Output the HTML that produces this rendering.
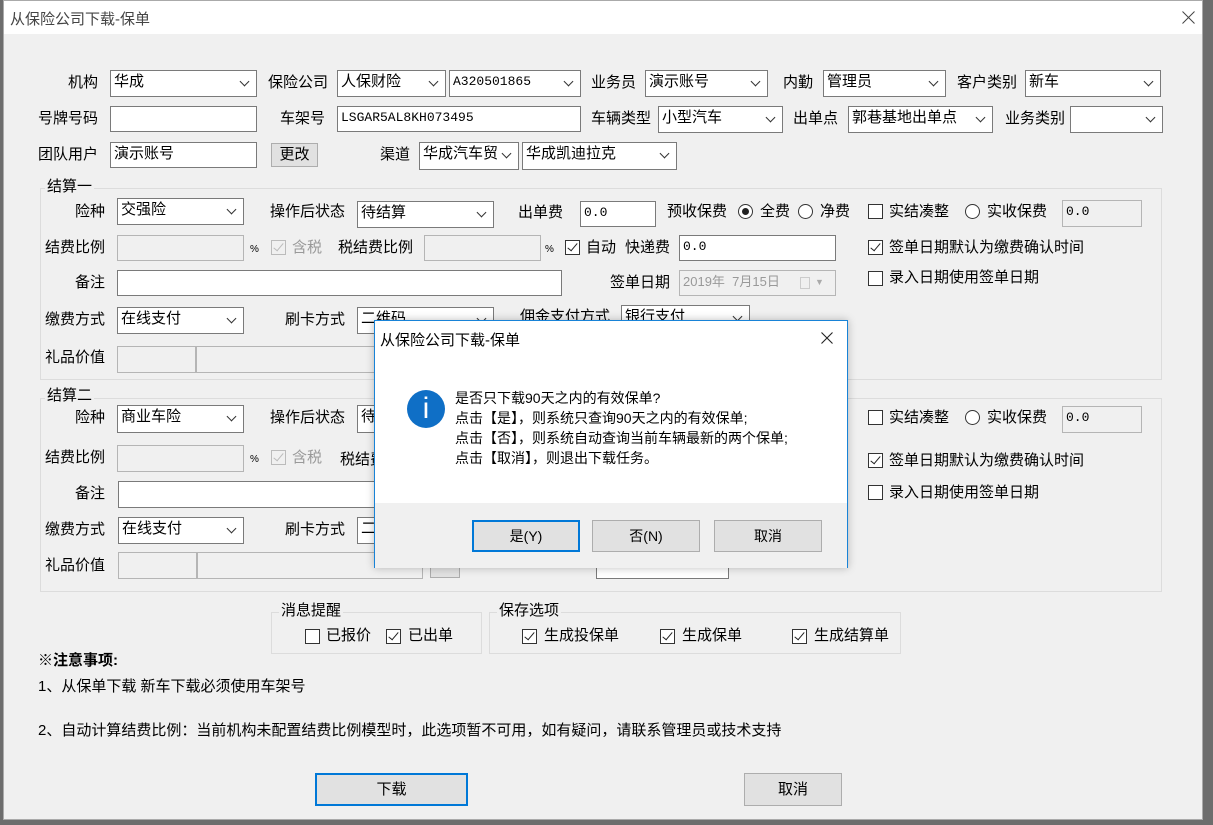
<!DOCTYPE html>
<html><head><meta charset="utf-8">
<style>
*{box-sizing:border-box;margin:0;padding:0}
body{width:1213px;height:825px;overflow:hidden;background:#6d6d6d;font-family:"Liberation Sans","Noto Sans CJK SC","WenQuanYi Zen Hei",sans-serif;font-size:15px;color:#000;position:relative}
#win{position:absolute;left:3px;top:0;width:1200px;height:820px;background:#f0f0f0;border:1px solid #aaa}
#tb{position:absolute;left:0;top:0;width:100%;height:33px;background:#fff}
.a{position:absolute;white-space:nowrap}
.l{position:absolute;white-space:nowrap;line-height:20px}
.b{position:absolute;background:#fff;border:1px solid #7a7a7a;line-height:22px;padding-left:3px;font-size:15px;white-space:nowrap;overflow:hidden}
.d{background:#f0f0f0;border-color:#b5b5b5;color:#777}
.s:after{content:"";position:absolute;right:8px;top:7px;width:6px;height:6px;border-right:1px solid #333;border-bottom:1px solid #333;transform:rotate(45deg)}
.m{font-family:"Liberation Mono","Noto Sans CJK SC",monospace;font-size:13px}
.cb{position:absolute;width:15px;height:15px;border:1px solid #333;background:#fff}
.cb.k:after{content:"";position:absolute;left:4px;top:0px;width:4px;height:9px;border-right:1.5px solid #222;border-bottom:1.5px solid #222;transform:rotate(40deg)}
.cb.dis{border-color:#bbb;background:#f0f0f0}
.cb.dis:after{border-color:#bbb}
.rb{position:absolute;width:15px;height:15px;border:1px solid #333;border-radius:50%;background:#fff}
.rb.k:after{content:"";position:absolute;left:3px;top:3px;width:7px;height:7px;border-radius:50%;background:#222}
.g{position:absolute;border:1px solid #dcdcdc}
.lg{position:absolute;background:#f0f0f0;padding:0 2px;line-height:16px}
.btn{position:absolute;background:#e1e1e1;border:1px solid #adadad;text-align:center;font-size:14px}
.btn.p{border:2px solid #0078d7}
</style></head><body>
<div id="win">
<div id="tb"><div class="a" style="left:6px;top:7px;font-size:15px;color:#444">从保险公司下载-保单</div>
<svg class="a" style="left:1178px;top:10px" width="13" height="13" viewBox="0 0 13 13"><path d="M0.5 0.5L12.5 12.5M12.5 0.5L0.5 12.5" stroke="#444" stroke-width="1"/></svg></div>
</div>
<div style="position:absolute;left:0;top:0;width:1213px;height:825px">
<!-- row1 -->
<div class="l" style="left:68px;top:73px">机构</div>
<div class="b s" style="left:110px;top:70px;width:147px;height:27px">华成</div>
<div class="l" style="left:268px;top:73px">保险公司</div>
<div class="b s" style="left:337px;top:70px;width:109px;height:27px">人保财险</div>
<div class="b s m" style="left:449px;top:70px;width:132px;height:27px">A320501865</div>
<div class="l" style="left:591px;top:73px">业务员</div>
<div class="b s" style="left:645px;top:70px;width:123px;height:27px">演示账号</div>
<div class="l" style="left:783px;top:73px">内勤</div>
<div class="b s" style="left:823px;top:70px;width:123px;height:27px">管理员</div>
<div class="l" style="left:957px;top:73px">客户类别</div>
<div class="b s" style="left:1025px;top:70px;width:136px;height:27px">新车</div>
<!-- row2 -->
<div class="l" style="left:38px;top:109px">号牌号码</div>
<div class="b" style="left:110px;top:106px;width:147px;height:26px"></div>
<div class="l" style="left:280px;top:109px">车架号</div>
<div class="b m" style="left:337px;top:106px;width:244px;height:26px">LSGAR5AL8KH073495</div>
<div class="l" style="left:591px;top:109px">车辆类型</div>
<div class="b s" style="left:658px;top:106px;width:125px;height:27px">小型汽车</div>
<div class="l" style="left:793px;top:109px">出单点</div>
<div class="b s" style="left:848px;top:106px;width:145px;height:27px">郭巷基地出单点</div>
<div class="l" style="left:1005px;top:109px">业务类别</div>
<div class="b s" style="left:1070px;top:106px;width:93px;height:27px"></div>
<!-- row3 -->
<div class="l" style="left:38px;top:145px">团队用户</div>
<div class="b" style="left:110px;top:142px;width:147px;height:26px">演示账号</div>
<div class="btn" style="left:271px;top:143px;width:47px;height:24px;line-height:22px;font-size:15px">更改</div>
<div class="l" style="left:380px;top:145px">渠道</div>
<div class="b s" style="left:419px;top:142px;width:100px;height:28px">华成汽车贸</div>
<div class="b s" style="left:522px;top:142px;width:155px;height:28px">华成凯迪拉克</div>

<div class="g" style="left:40px;top:188px;width:1122px;height:192px"></div>
<div class="lg" style="left:45px;top:179px">结算一</div>
<div class="g" style="left:40px;top:398px;width:1122px;height:194px"></div>
<div class="lg" style="left:45px;top:388px">结算二</div>

<div class="l" style="left:75px;top:202px">险种</div>
<div class="b s" style="left:117px;top:198px;width:127px;height:27px">交强险</div>
<div class="l" style="left:270px;top:202px">操作后状态</div>
<div class="b s" style="left:357px;top:201px;width:137px;height:27px">待结算</div>
<div class="l" style="left:518px;top:203px">出单费</div>
<div class="b m" style="left:580px;top:201px;width:76px;height:26px">0.0</div>
<div class="l" style="left:667px;top:202px">预收保费</div>
<div class="rb k" style="left:738px;top:204px"></div><div class="l" style="left:760px;top:202px">全费</div>
<div class="rb" style="left:798px;top:204px"></div><div class="l" style="left:820px;top:202px">净费</div>
<div class="cb" style="left:868px;top:204px"></div><div class="l" style="left:889px;top:202px">实结凑整</div>
<div class="rb" style="left:965px;top:204px"></div><div class="l" style="left:987px;top:202px">实收保费</div>
<div class="b d m" style="left:1062px;top:200px;width:80px;height:27px;color:#000">0.0</div>

<div class="l" style="left:45px;top:238px">结费比例</div>
<div class="b d" style="left:117px;top:235px;width:127px;height:26px"></div>
<div class="l" style="left:250px;top:240px;font-size:10px">%</div>
<div class="cb k dis" style="left:271px;top:240px"></div><div class="l" style="left:292px;top:238px;color:#999">含税</div>
<div class="l" style="left:338px;top:238px">税结费比例</div>
<div class="b d" style="left:424px;top:235px;width:117px;height:26px"></div>
<div class="l" style="left:545px;top:240px;font-size:10px">%</div>
<div class="cb k" style="left:565px;top:240px"></div><div class="l" style="left:586px;top:238px">自动</div>
<div class="l" style="left:625px;top:238px">快递费</div>
<div class="b m" style="left:679px;top:235px;width:157px;height:26px">0.0</div>
<div class="cb k" style="left:868px;top:240px"></div><div class="l" style="left:889px;top:238px">签单日期默认为缴费确认时间</div>

<div class="l" style="left:75px;top:273px">备注</div>
<div class="b" style="left:117px;top:270px;width:445px;height:26px"></div>
<div class="l" style="left:610px;top:273px">签单日期</div>
<div class="b d" style="left:679px;top:270px;width:157px;height:26px;font-size:13px;color:#999">2019年&nbsp; 7月15日<span style="position:absolute;left:120px;top:6px;width:10px;height:12px;border:1px solid #ccc"></span><span style="position:absolute;left:135px;top:0;font-size:9px;color:#aaa">▼</span></div>
<div class="cb" style="left:868px;top:271px"></div><div class="l" style="left:889px;top:268px">录入日期使用签单日期</div>

<div class="l" style="left:45px;top:310px">缴费方式</div>
<div class="b s" style="left:117px;top:307px;width:127px;height:27px">在线支付</div>
<div class="l" style="left:285px;top:310px">刷卡方式</div>
<div class="b s" style="left:357px;top:307px;width:137px;height:27px">二维码</div>
<div class="l" style="left:520px;top:307px">佣金支付方式</div>
<div class="b s" style="left:621px;top:305px;width:129px;height:27px">银行支付</div>

<div class="l" style="left:45px;top:348px">礼品价值</div>
<div class="b d" style="left:117px;top:346px;width:79px;height:27px"></div>
<div class="b d" style="left:196px;top:346px;width:226px;height:27px"></div>

<div class="l" style="left:75px;top:408px">险种</div>
<div class="b s" style="left:117px;top:405px;width:127px;height:28px">商业车险</div>
<div class="l" style="left:270px;top:408px">操作后状态</div>
<div class="b s" style="left:357px;top:405px;width:137px;height:28px">待</div>
<div class="cb" style="left:868px;top:410px"></div><div class="l" style="left:889px;top:408px">实结凑整</div>
<div class="rb" style="left:965px;top:410px"></div><div class="l" style="left:987px;top:408px">实收保费</div>
<div class="b d m" style="left:1062px;top:406px;width:80px;height:27px;color:#000">0.0</div>

<div class="l" style="left:45px;top:448px">结费比例</div>
<div class="b d" style="left:117px;top:445px;width:127px;height:27px"></div>
<div class="l" style="left:250px;top:450px;font-size:10px">%</div>
<div class="cb k dis" style="left:271px;top:450px"></div><div class="l" style="left:292px;top:448px;color:#999">含税</div>
<div class="l" style="left:340px;top:450px">税结费</div>
<div class="cb k" style="left:868px;top:453px"></div><div class="l" style="left:889px;top:451px">签单日期默认为缴费确认时间</div>

<div class="l" style="left:75px;top:484px">备注</div>
<div class="b" style="left:118px;top:481px;width:300px;height:27px"></div>
<div class="cb" style="left:868px;top:485px"></div><div class="l" style="left:889px;top:483px">录入日期使用签单日期</div>

<div class="l" style="left:45px;top:520px">缴费方式</div>
<div class="b s" style="left:118px;top:517px;width:126px;height:27px">在线支付</div>
<div class="l" style="left:285px;top:520px">刷卡方式</div>
<div class="b s" style="left:357px;top:517px;width:137px;height:27px">二</div>

<div class="l" style="left:45px;top:556px">礼品价值</div>
<div class="b d" style="left:118px;top:552px;width:79px;height:27px"></div>
<div class="b d" style="left:197px;top:552px;width:226px;height:27px"></div>
<div class="btn" style="left:430px;top:558px;width:30px;height:20px"></div>
<div class="b" style="left:596px;top:552px;width:133px;height:27px"></div>

<div class="g" style="left:271px;top:612px;width:211px;height:42px"></div>
<div class="lg" style="left:279px;top:603px">消息提醒</div>
<div class="cb" style="left:305px;top:629px"></div><div class="l" style="left:326px;top:626px">已报价</div>
<div class="cb k" style="left:386px;top:629px"></div><div class="l" style="left:408px;top:626px">已出单</div>
<div class="g" style="left:489px;top:612px;width:412px;height:42px"></div>
<div class="lg" style="left:497px;top:603px">保存选项</div>
<div class="cb k" style="left:522px;top:629px"></div><div class="l" style="left:544px;top:626px">生成投保单</div>
<div class="cb k" style="left:660px;top:629px"></div><div class="l" style="left:682px;top:626px">生成保单</div>
<div class="cb k" style="left:792px;top:629px"></div><div class="l" style="left:814px;top:626px">生成结算单</div>

<div class="l" style="left:38px;top:651px;font-weight:bold">※注意事项:</div>
<div class="l" style="left:38px;top:677px;font-size:15px">1、从保单下载 新车下载必须使用车架号</div>
<div class="l" style="left:38px;top:721px;font-size:15px">2、自动计算结费比例：当前机构未配置结费比例模型时，此选项暂不可用，如有疑问，请联系管理员或技术支持</div>

<div class="btn p" style="left:315px;top:773px;width:153px;height:33px;line-height:29px;font-size:15px">下载</div>
<div class="btn" style="left:744px;top:773px;width:98px;height:33px;line-height:31px;font-size:15px">取消</div>

<div style="position:absolute;left:374px;top:320px;width:474px;height:248px;background:#f0f0f0;border:1px solid #1883d7;border-bottom:none;box-shadow:0 0 8px rgba(0,0,0,.25)">
<div style="position:absolute;left:0;top:0;width:100%;height:182px;background:#fff"></div>
<div class="a" style="left:5px;top:8px;font-size:15px">从保险公司下载-保单</div>
<svg class="a" style="left:446px;top:11px" width="12" height="12" viewBox="0 0 12 12"><path d="M0.5 0.5L11.5 11.5M11.5 0.5L0.5 11.5" stroke="#222" stroke-width="1.1"/></svg>
<div style="position:absolute;left:32px;top:69px;width:38px;height:38px;border-radius:50%;background:#0f6fc6;color:#fff;text-align:center;font-size:30px;line-height:38px;font-family:'Liberation Sans',sans-serif">i</div>
<div class="a" style="left:80px;top:67px;font-size:14px;line-height:20px">是否只下载90天之内的有效保单?<br>点击【是】，则系统只查询90天之内的有效保单;<br>点击【否】，则系统自动查询当前车辆最新的两个保单;<br>点击【取消】，则退出下载任务。</div>
<div class="btn p" style="left:97px;top:199px;width:108px;height:32px;line-height:28px">是(Y)</div>
<div class="btn" style="left:217px;top:199px;width:108px;height:32px;line-height:30px">否(N)</div>
<div class="btn" style="left:339px;top:199px;width:108px;height:32px;line-height:30px">取消</div>
</div>
</div>
</body></html>
